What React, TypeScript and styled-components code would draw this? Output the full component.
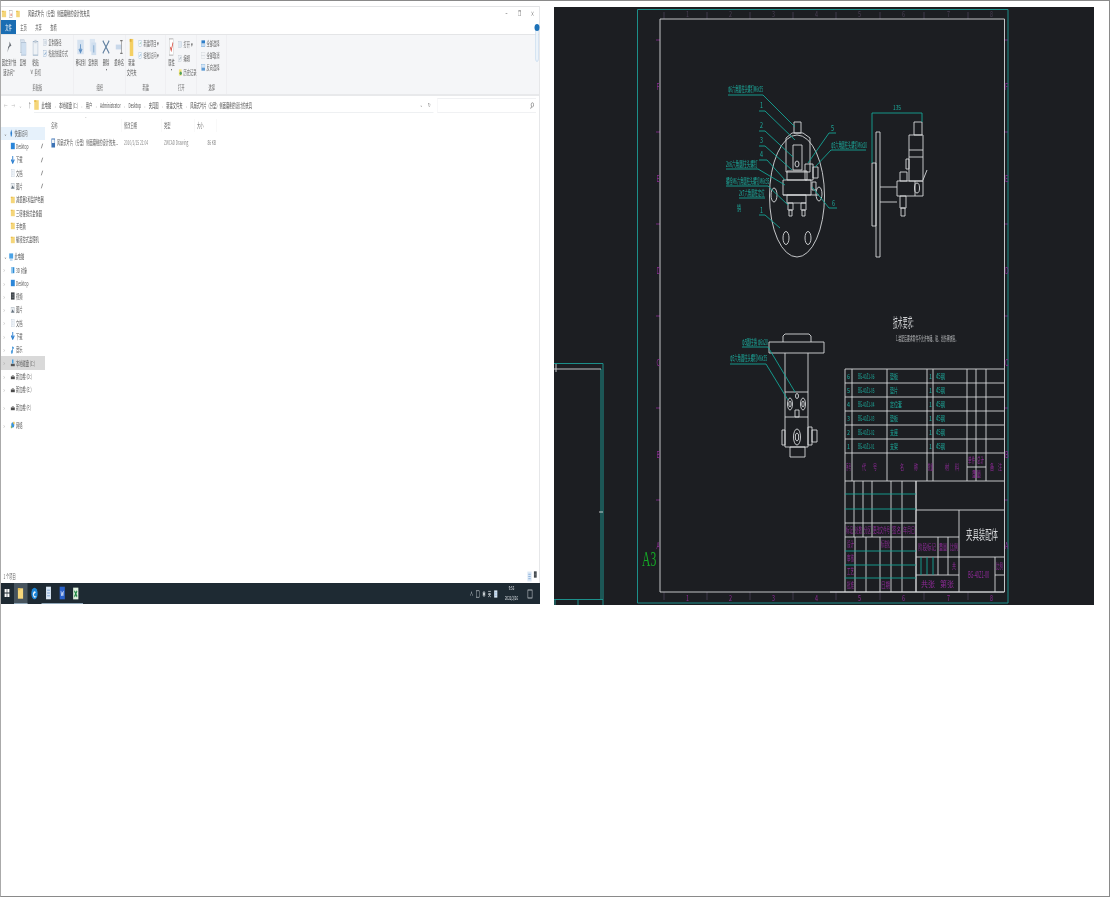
import React from "react";
import styled, { createGlobalStyle } from "styled-components";

const Global = createGlobalStyle`
  html, body { margin: 0; padding: 0; background: #fff; }
  body { font-family: "Noto Sans CJK SC", "Noto Sans", sans-serif; }
`;

const Page = styled.div`
  box-sizing: border-box;
  width: 1110px;
  height: 897px;
  border: 1px solid #8a8a8a;
  border-left-color: #aaa;
  padding-top: 5px;
  display: flex;
  align-items: flex-start;
  gap: 14px;
  overflow: hidden;
`;

/* ---------- Explorer: a screenshot squeezed to half its width ---------- */
const WindowFrame = styled.div`
  width: 539px;
  height: 598px;
  flex: none;
  overflow: hidden;
  filter: blur(0.3px);
`;
const WindowInner = styled.div`
  position: relative;
  box-sizing: border-box;
  width: 1078px;
  height: 598px;
  transform: scaleX(0.5);
  transform-origin: 0 0;
  display: flex;
  flex-direction: column;
  background: #fff;
  border-top: 1px solid #e2e3e5;
  border-right: 2px solid #e6e7e9;
  color: #5a5a5a;
  font-size: 6.5px;
  line-height: 1;
  white-space: nowrap;
`;
const TitleBar = styled.div`
  height: 13px;
  display: flex;
  align-items: center;
  gap: 5px;
  padding: 0 0 0 1px;
  flex: none;
`;
const TitleText = styled.span`
  margin-left: 11px;
  color: #444;
`;
const WindowButtons = styled.div`
  margin-left: auto;
  display: flex;
  color: #555;
  font-size: 7px;
`;
const WindowButton = styled.span`
  width: 26px;
  text-align: center;
`;
const TabBar = styled.div`
  height: 14px;
  display: flex;
  align-items: stretch;
  flex: none;
  border-bottom: 1px solid #e4e5e7;
`;
const Tab = styled.span<{ $file?: boolean }>`
  width: ${(p) => (p.$file ? 30 : 30)}px;
  display: flex;
  align-items: center;
  justify-content: center;
  background: ${(p) => (p.$file ? "#1a6db3" : "transparent")};
  color: ${(p) => (p.$file ? "#fff" : "#555")};
`;
const Ribbon = styled.div`
  height: 59px;
  flex: none;
  display: flex;
  background: #f5f6f8;
  border-bottom: 2px solid #e8e9eb;
`;
const Group = styled.div<{ $w: number }>`
  width: ${(p) => p.$w}px;
  flex: none;
  box-sizing: border-box;
  display: flex;
  flex-direction: column;
  border-right: 1px solid #e8e9ec;
`;
const GroupBody = styled.div`
  height: 46px;
  display: flex;
  flex: none;
  padding-top: 2px;
`;
const GroupCaption = styled.div`
  text-align: center;
  color: #6a6a6a;
  padding-top: 1px;
`;
const BigButton = styled.div<{ $w: number }>`
  width: ${(p) => p.$w}px;
  flex: none;
  display: flex;
  flex-direction: column;
  align-items: center;
`;
const BigIcon = styled.div`
  height: 20px;
  display: flex;
  align-items: center;
  justify-content: center;
`;
const BigLabel = styled.div`
  height: 10px;
  display: flex;
  align-items: center;
  color: #555;
`;
const Caret = styled.div`
  color: #555;
  font-size: 4px;
  height: 5px;
`;
const SmallColumn = styled.div<{ $h: number; $left: number }>`
  display: flex;
  flex-direction: column;
  padding-left: ${(p) => p.$left}px;
  & > div { height: ${(p) => p.$h}px; }
`;
const SmallRow = styled.div`
  display: flex;
  align-items: center;
  gap: 2px;
  color: #666;
`;
const CutRow = styled(SmallRow)`
  margin-top: 2px;
`;
const HelpCapsule = styled.div`
  position: absolute;
  right: 1px;
  top: 20px;
  width: 4px;
  height: 33px;
  border: 1px solid #bcd4ec;
  border-radius: 3px;
  background: #f7fafd;
`;
const HelpDot = styled.div`
  position: absolute;
  right: -1px;
  top: 17px;
  width: 10px;
  height: 7px;
  border-radius: 50%;
  background: #1d72b8;
`;
const AddressRow = styled.div`
  height: 20px;
  flex: none;
  box-sizing: border-box;
  padding: 2px 6px 3px 0;
  display: flex;
  gap: 8px;
`;
const NavButtons = styled.div`
  width: 58px;
  flex: none;
  display: flex;
  align-items: center;
  padding-left: 6px;
  gap: 8px;
  color: #bbb;
  font-size: 7px;
  box-sizing: border-box;
`;
const Up = styled.span`
  color: #666;
  margin-left: 4px;
`;
const AddressBox = styled.div`
  flex: 1;
  display: flex;
  align-items: center;
  gap: 5px;
  border-bottom: 1px solid #eef0f2;
  padding-right: 6px;
`;
const Crumb = styled.span`
  color: #4d4d4d;
`;
const CrumbSep = styled.span`
  color: #888;
  font-size: 5px;
  margin: 0 2px;
`;
const AddressEnd = styled.span`
  margin-left: auto;
  color: #777;
  font-size: 6px;
  display: flex;
  gap: 12px;
`;
const SearchBox = styled.div`
  width: 192px;
  flex: none;
  display: flex;
  align-items: center;
  justify-content: flex-end;
  border: 1px solid #f0f1f3;
  border-width: 1px 0 1px 1px;
  padding-right: 4px;
`;
const Main = styled.div`
  flex: 1;
  min-height: 0;
  display: flex;
`;
const Sidebar = styled.div`
  width: 88px;
  flex: none;
  padding-top: 10.5px;
  box-sizing: border-box;
`;
const NavGroup = styled.div<{ $gap?: number }>`
  margin-top: ${(p) => p.$gap ?? 0}px;
`;
const NavRow = styled.div<{ $active?: string; $indent?: number }>`
  height: 13.3px;
  display: flex;
  align-items: center;
  position: relative;
  gap: 2px;
  padding-left: ${(p) => p.$indent ?? 18}px;
  background: ${(p) => (p.$active === "selected" ? "#d9d9d9" : p.$active === "hover" ? "#e6f1fb" : "transparent")};
  color: #555;
`;
const Chevron = styled.span`
  position: absolute;
  left: 5px;
  font-size: 7px;
  color: #777;
`;
const PinMark = styled.span`
  position: absolute;
  left: 79px;
`;
const FileArea = styled.div`
  flex: 1;
  padding-left: 8px;
  padding-top: 3px;
`;
const FileGrid = styled.div`
  display: grid;
  grid-template-columns: 146px 80px 66px 44px;
  width: 340px;
`;
const HeadCell = styled.div`
  position: relative;
  height: 13px;
  display: flex;
  align-items: center;
  padding-left: 4px;
  color: #6a6a6a;
  border-right: 1px solid #f2f2f2;
`;
const SortMark = styled.span`
  position: absolute;
  left: 72px;
  top: -3px;
  font-size: 4px;
  color: #888;
`;
const Cell = styled.div<{ $right?: boolean }>`
  height: 13px;
  margin-top: 4px;
  display: flex;
  align-items: center;
  gap: 3px;
  padding-left: 4px;
  color: #8a8a8a;
  justify-content: ${(p) => (p.$right ? "flex-end" : "flex-start")};
  padding-right: ${(p) => (p.$right ? 2 : 0)}px;
`;
const NameText = styled.span`
  color: #555;
`;
const StatusBar = styled.div`
  height: 13px;
  flex: none;
  display: flex;
  align-items: center;
  padding-left: 5px;
  color: #666;
`;
const ViewIcons = styled.div`
  margin-left: auto;
  margin-right: 4px;
  display: flex;
  gap: 2px;
`;
const Taskbar = styled.div`
  height: 21px;
  flex: none;
  background: #1e2a33;
  display: flex;
  align-items: stretch;
  color: #dfe4e8;
  margin-right: -2px;
`;
const TaskItem = styled.div<{ $active?: boolean; $open?: boolean }>`
  width: 27.6px;
  flex: none;
  display: flex;
  align-items: center;
  justify-content: center;
  box-sizing: border-box;
  background: ${(p) => (p.$active ? "#47545e" : "transparent")};
  border-bottom: 1px solid ${(p) => (p.$open || p.$active ? "#8fa6b8" : "transparent")};
  &:first-child { margin-left: -2px; }
`;
const Tray = styled.div`
  margin-left: auto;
  display: flex;
  align-items: center;
  gap: 5px;
  font-size: 6px;
  padding-right: 14px;
`;
const Clock = styled.div`
  display: flex;
  flex-direction: column;
  align-items: center;
  gap: 5px;
  font-size: 5.5px;
  width: 40px;
  margin: 0 6px 0 2px;
`;

/* ---------- Small drawn icons (width is doubled, the window is squeezed) ---------- */
const Svg = styled.svg`
  flex: none;
  display: block;
`;
type IconName =
  | "folder" | "doc" | "pin" | "copy" | "paste" | "scissors" | "path" | "shortcut" | "move" | "copyTo" | "del" | "rename"
  | "newFolder" | "newItem" | "access" | "props" | "open" | "edit" | "history" | "all" | "none" | "invert"
  | "desktop" | "down" | "file" | "pic" | "star" | "pc" | "cube" | "video" | "music" | "disk" | "disk2" | "net" | "cad"
  | "win" | "edge" | "word" | "excel" | "pageBlue" | "note" | "search" | "quickPin";

const Icon = ({ n, w, h }: { n: IconName; w: number; h: number }) => {
  const v = `0 0 20 20`;
  const body: Record<IconName, React.ReactNode> = {
    folder: <><rect x="1" y="2" width="18" height="16" fill="#f5d67a" /><rect x="1" y="2" width="8" height="3" fill="#e8bd4f" /></>,
    doc: <><rect x="3" y="1" width="14" height="18" fill="#fff" stroke="#a8a8a8" strokeWidth="1.5" /><rect x="6" y="9" width="8" height="6" fill="#e8a9a0" /></>,
    pin: <path d="M12 1 L18 8 L13 9 L9 12 L5 19 L7 10 L11 7 Z" fill="#6a7077" />,
    copy: <><rect x="2" y="1" width="13" height="15" fill="#dce6f1" stroke="#bcc9d6" /><rect x="6" y="4" width="13" height="15" fill="#cfdff0" stroke="#aebfd2" /></>,
    paste: <><rect x="3" y="3" width="14" height="16" fill="#eef2f6" stroke="#9fb3c8" strokeWidth="1.2" /><rect x="7" y="1" width="6" height="4" fill="#c5cfd9" /></>,
    scissors: <path d="M4 2 L12 14 M16 2 L8 14" stroke="#777" strokeWidth="2" fill="none" />,
    path: <><rect x="3" y="2" width="14" height="16" fill="#e8edf3" stroke="#a5b4c4" /><path d="M6 8h8M6 12h8" stroke="#7f93a8" /></>,
    shortcut: <><rect x="3" y="2" width="14" height="16" fill="#eef2f6" stroke="#7da0c6" /><path d="M7 14 L13 7" stroke="#3f78b5" strokeWidth="2" /></>,
    move: <><rect x="2" y="2" width="16" height="16" fill="#d5e2f0" /><path d="M10 7v9M6 12l4 4 4-4" stroke="#5d8fc4" strokeWidth="2" fill="none" /></>,
    copyTo: <><rect x="2" y="1" width="13" height="14" fill="#dbe6f2" /><rect x="6" y="5" width="12" height="14" fill="#cfdeee" /><path d="M12 8v8" stroke="#7aa3cc" strokeWidth="2" /></>,
    del: <path d="M2 2 L18 18 M18 2 L2 18" stroke="#5f7f9f" strokeWidth="2.2" fill="none" />,
    rename: <><rect x="2" y="7" width="14" height="6" fill="#c8d8ea" /><path d="M16 2v16M13 2h6M13 18h6" stroke="#777" strokeWidth="1.4" fill="none" /></>,
    newFolder: <><rect x="3" y="1" width="14" height="18" fill="#f4cf62" /><rect x="3" y="1" width="7" height="3" fill="#dfb03c" /></>,
    newItem: <><rect x="4" y="2" width="12" height="16" fill="#f6fafd" stroke="#7fa6c9" /><path d="M8 12 L12 7" stroke="#49a06b" strokeWidth="2" /></>,
    access: <><rect x="4" y="2" width="12" height="16" fill="#f6fafd" stroke="#7fa6c9" /><path d="M7 14 Q10 4 14 8" stroke="#4b84bd" strokeWidth="1.6" fill="none" /></>,
    props: <><rect x="3" y="1" width="14" height="18" fill="#fff" stroke="#a9a9a9" /><path d="M6 10 L9 14 L15 5" stroke="#d23c2f" strokeWidth="2" fill="none" /></>,
    open: <><rect x="3" y="2" width="14" height="16" fill="#dfe8f2" stroke="#a9b9c9" /></>,
    edit: <><rect x="3" y="2" width="14" height="16" fill="#edf1f5" stroke="#b0b9c3" /><path d="M7 13 L13 6" stroke="#7a8794" strokeWidth="2" /></>,
    history: <><rect x="4" y="1" width="12" height="18" fill="#f3e27a" /><circle cx="12" cy="12" r="5" fill="#4f9e5c" /></>,
    all: <><rect x="2" y="1" width="16" height="8" fill="#2f7fc9" /><rect x="2" y="11" width="16" height="8" fill="#c8def3" stroke="#2f7fc9" /></>,
    none: <><rect x="2" y="1" width="16" height="8" fill="#f3f5f7" stroke="#c6cbd0" /><rect x="2" y="11" width="16" height="8" fill="#f3f5f7" stroke="#c6cbd0" /></>,
    invert: <><rect x="2" y="1" width="16" height="8" fill="#d6e6f5" stroke="#5d9bd5" /><rect x="2" y="11" width="16" height="8" fill="#5d9bd5" /></>,
    desktop: <rect x="1" y="2" width="18" height="16" fill="#2b86d9" />,
    down: <path d="M10 0v14M3 9l7 9 7-9" stroke="#2c7fd0" strokeWidth="4" fill="none" />,
    file: <><rect x="4" y="0" width="12" height="20" fill="#f3f6f9" stroke="#9db1c4" /><path d="M7 6h6M7 10h6M7 14h6" stroke="#a9bccd" /></>,
    pic: <><rect x="2" y="3" width="16" height="14" fill="#e9edf1" stroke="#8f9ba6" /><path d="M3 16 L9 8 L17 16" fill="#66727d" /></>,
    star: <path d="M10 1 L14 10 L12 19 L8 19 L6 10 Z" fill="#2c7fd0" />,
    pc: <><rect x="1" y="1" width="18" height="13" fill="#4ba3e6" /><rect x="4" y="16" width="12" height="3" fill="#9fc7ea" /></>,
    cube: <><rect x="3" y="3" width="14" height="15" fill="#2e8ed8" /><rect x="3" y="3" width="7" height="15" fill="#a7d3f2" /></>,
    video: <><rect x="2" y="1" width="16" height="18" fill="#3c4247" /><path d="M5 6h10M5 10h10M5 14h10" stroke="#c5c9cd" /></>,
    music: <path d="M9 2v13a3 3 0 1 1-3-3h3 M9 2 L15 6" stroke="#2d8ad6" strokeWidth="3" fill="none" />,
    disk: <><rect x="1" y="12" width="18" height="6" fill="#555" /><path d="M7 1h6v10H7z" fill="#3c9ae0" /></>,
    disk2: <><rect x="1" y="11" width="18" height="7" fill="#4b4b4b" /><rect x="6" y="8" width="9" height="3" fill="#8d8d8d" /></>,
    net: <><circle cx="10" cy="10" r="7" fill="#3a93dd" /><rect x="1" y="12" width="6" height="6" fill="#88b36a" /><rect x="12" y="2" width="6" height="6" fill="#e6c14f" /></>,
    cad: <><rect x="2" y="1" width="16" height="18" fill="#3d73b5" /><rect x="4" y="3" width="12" height="7" fill="#f0f4f8" /></>,
    win: <><rect x="2" y="2" width="7" height="7" fill="#fff" /><rect x="11" y="2" width="7" height="7" fill="#fff" /><rect x="2" y="11" width="7" height="7" fill="#fff" /><rect x="11" y="11" width="7" height="7" fill="#fff" /></>,
    edge: <><circle cx="10" cy="10" r="9" fill="#1f87d8" /><path d="M5 11 Q8 4 14 8 L8 11 Q9 16 16 14 Q9 20 5 11Z" fill="#f4f8fb" /></>,
    pageBlue: <><rect x="3" y="1" width="14" height="18" fill="#dbe8f6" /><path d="M6 6h8M6 10h8M6 14h8" stroke="#5d8fc9" strokeWidth="1.4" /></>,
    word: <><rect x="2" y="1" width="16" height="18" fill="#2b62c9" /><path d="M6 7 L8 14 L10 9 L12 14 L14 7" stroke="#fff" fill="none" /></>,
    excel: <><rect x="2" y="1" width="16" height="18" fill="#dff0df" /><path d="M6 6 L14 15 M14 6 L6 15" stroke="#238a46" strokeWidth="3" /></>,
    note: <rect x="3" y="2" width="14" height="16" fill="none" stroke="#dfe4e8" strokeWidth="1.5" />,
    search: <><circle cx="12" cy="8" r="6" fill="none" stroke="#777" strokeWidth="2.4" /><path d="M8 13 L3 19" stroke="#777" strokeWidth="3" /></>,
    quickPin: <path d="M15 2 L5 18" stroke="#666" strokeWidth="3" />,
  };
  return (
    <Svg width={w} height={h} viewBox={v} preserveAspectRatio="none">
      {body[n]}
    </Svg>
  );
};

const Big = ({ n, w, iw, ih, lines, caret, children }: { n: IconName; w: number; iw: number; ih: number; lines: string[]; caret?: boolean; children?: React.ReactNode }) => (
  <BigButton $w={w}>
    <BigIcon><Icon n={n} w={iw} h={ih} /></BigIcon>
    {lines.map((l) => <BigLabel key={l}>{l}</BigLabel>)}
    {caret && <Caret>▾</Caret>}
    {children}
  </BigButton>
);
const Small = ({ n, t }: { n: IconName; t: string }) => (
  <SmallRow><Icon n={n} w={9} h={7} /><span>{t}</span></SmallRow>
);

const crumbs = ["此电脑", "本地磁盘 (C:)", "用户", "Administrator", "Desktop", "夹具图", "新建文件夹", "风扇式叶片（分型）侧面磨削的设计的夹具"];

type Nav = { t: string; i: IconName; pin?: boolean; chev?: boolean; head?: boolean; active?: string };
const quick: Nav[] = [
  { t: "Desktop", i: "desktop", pin: true },
  { t: "下载", i: "down", pin: true },
  { t: "文档", i: "file", pin: true },
  { t: "图片", i: "pic", pin: true },
  { t: "减重器1和监护电器", i: "folder" },
  { t: "三塔锥销式金像圆", i: "folder" },
  { t: "手电筒", i: "folder" },
  { t: "榆液控式监理机", i: "folder" },
];
const pcs: Nav[] = [
  { t: "3D 对象", i: "cube", chev: true },
  { t: "Desktop", i: "desktop", chev: true },
  { t: "视频", i: "video", chev: true },
  { t: "图片", i: "pic", chev: true },
  { t: "文档", i: "file", chev: true },
  { t: "下载", i: "down", chev: true },
  { t: "音乐", i: "music", chev: true },
  { t: "本地磁盘 (C:)", i: "disk", chev: true, active: "selected" },
  { t: "新加卷 (D:)", i: "disk2", chev: true },
  { t: "新加卷 (E:)", i: "disk2", chev: true },
];
const NavLine = ({ r }: { r: Nav }) => (
  <NavRow $active={r.active} $indent={r.head ? 16 : 19}>
    {(r.chev || r.head) && <Chevron>{r.head ? "⌄" : "›"}</Chevron>}
    <Icon n={r.i} w={9} h={8} />
    <span>{r.t}</span>
    {r.pin && <PinMark><Icon n="quickPin" w={6} h={6} /></PinMark>}
  </NavRow>
);

const Explorer = () => (
  <WindowFrame>
    <WindowInner>
      <TitleBar>
        <Icon n="folder" w={10} h={8} />
        <Icon n="doc" w={9} h={8} />
        <Icon n="folder" w={8} h={8} />
        <TitleText>风扇式叶片（分型）侧面磨削的设计的夹具</TitleText>
        <WindowButtons>
          <WindowButton>−</WindowButton>
          <WindowButton>❐</WindowButton>
          <WindowButton>×</WindowButton>
        </WindowButtons>
      </TitleBar>
      <TabBar>
        <Tab $file>文件</Tab>
        <Tab>主页</Tab>
        <Tab>共享</Tab>
        <Tab>查看</Tab>
      </TabBar>
      <Ribbon>
        <Group $w={146}>
          <GroupBody>
            <Big n="pin" w={32} iw={12} ih={12} lines={["固定到\"快", "速访问\""]} />
            <Big n="copy" w={24} iw={14} ih={17} lines={["复制"]} />
            <Big n="paste" w={26} iw={14} ih={17} lines={["粘贴"]}>
              <CutRow><Icon n="scissors" w={7} h={7} /><span>剪切</span></CutRow>
            </Big>
            <SmallColumn $h={11} $left={2}>
              <Small n="path" t="复制路径" />
              <Small n="shortcut" t="粘贴快捷方式" />
            </SmallColumn>
          </GroupBody>
          <GroupCaption>剪贴板</GroupCaption>
        </Group>
        <Group $w={104}>
          <GroupBody>
            <Big n="move" w={26} iw={16} ih={18} lines={["移动到"]} />
            <Big n="copyTo" w={24} iw={16} ih={18} lines={["复制到"]} />
            <Big n="del" w={28} iw={16} ih={16} lines={["删除"]} caret />
            <Big n="rename" w={24} iw={16} ih={16} lines={["重命名"]} />
          </GroupBody>
          <GroupCaption>组织</GroupCaption>
        </Group>
        <Group $w={80}>
          <GroupBody>
            <Big n="newFolder" w={22} iw={10} ih={19} lines={["新建", "文件夹"]} />
            <SmallColumn $h={12} $left={2}>
              <Small n="newItem" t="新建项目 ▾" />
              <Small n="access" t="轻松访问 ▾" />
            </SmallColumn>
          </GroupBody>
          <GroupCaption>新建</GroupCaption>
        </Group>
        <Group $w={62}>
          <GroupBody>
            <Big n="props" w={22} iw={12} ih={18} lines={["属性"]} caret />
            <SmallColumn $h={14} $left={2}>
              <Small n="open" t="打开 ▾" />
              <Small n="edit" t="编辑" />
              <Small n="history" t="历史记录" />
            </SmallColumn>
          </GroupBody>
          <GroupCaption>打开</GroupCaption>
        </Group>
        <Group $w={60}>
          <GroupBody>
            <SmallColumn $h={12} $left={8}>
              <Small n="all" t="全部选择" />
              <Small n="none" t="全部取消" />
              <Small n="invert" t="反向选择" />
            </SmallColumn>
          </GroupBody>
          <GroupCaption>选择</GroupCaption>
        </Group>
      </Ribbon>
      <HelpCapsule />
      <HelpDot />
      <AddressRow>
        <NavButtons>
          <span>←</span><span>→</span><span>⌄</span><Up>↑</Up>
        </NavButtons>
        <AddressBox>
          <Icon n="folder" w={10} h={12} />
          {crumbs.map((c, i) => (
            <React.Fragment key={c}>
              {i > 0 && <CrumbSep>›</CrumbSep>}
              <Crumb>{c}</Crumb>
            </React.Fragment>
          ))}
          <AddressEnd><span>⌄</span><span>↻</span></AddressEnd>
        </AddressBox>
        <SearchBox><Icon n="search" w={8} h={7} /></SearchBox>
      </AddressRow>
      <Main>
        <Sidebar>
          <NavGroup>
            <NavLine r={{ t: "快速访问", i: "star", head: true, active: "hover" }} />
            {quick.map((r) => <NavLine key={r.t} r={r} />)}
          </NavGroup>
          <NavGroup $gap={3.7}>
            <NavLine r={{ t: "此电脑", i: "pc", head: true }} />
            {pcs.map((r) => <NavLine key={r.t} r={r} />)}
          </NavGroup>
          <NavGroup $gap={4.7}>
            <NavLine r={{ t: "新加卷 (F:)", i: "disk2", chev: true }} />
          </NavGroup>
          <NavGroup $gap={4.7}>
            <NavLine r={{ t: "网络", i: "net", chev: true }} />
          </NavGroup>
        </Sidebar>
        <FileArea>
          <FileGrid>
            <HeadCell>名称<SortMark>⌃</SortMark></HeadCell>
            <HeadCell>修改日期</HeadCell>
            <HeadCell>类型</HeadCell>
            <HeadCell>大小</HeadCell>
            <Cell><Icon n="cad" w={9} h={10} /><NameText>风扇式叶片（分型）侧面磨削的设计的夹...</NameText></Cell>
            <Cell>2010/1/15 21:04</Cell>
            <Cell>ZWCAD Drawing</Cell>
            <Cell $right>86 KB</Cell>
          </FileGrid>
        </FileArea>
      </Main>
      <StatusBar>
        1 个项目
        <ViewIcons>
          <Icon n="pageBlue" w={12} h={11} />
          <Icon n="video" w={7} h={7} />
        </ViewIcons>
      </StatusBar>
      <Taskbar>
        <TaskItem><Icon n="win" w={12} h={10} /></TaskItem>
        <TaskItem $active><Icon n="folder" w={12} h={13} /></TaskItem>
        <TaskItem><Icon n="edge" w={14} h={13} /></TaskItem>
        <TaskItem $open><Icon n="pageBlue" w={14} h={14} /></TaskItem>
        <TaskItem $open><Icon n="word" w={13} h={14} /></TaskItem>
        <TaskItem $open><Icon n="excel" w={13} h={13} /></TaskItem>
        <Tray>
          <span>∧</span>
          <Icon n="note" w={9} h={8} />
          <span>◉</span>
          <span>英</span>
          <Icon n="pageBlue" w={9} h={8} />
          <Clock><span>9:56</span><span>2021/3/26</span></Clock>
          <Icon n="note" w={12} h={10} />
        </Tray>
      </Taskbar>
    </WindowInner>
  </WindowFrame>
);

/* ---------- CAD drawing ---------- */
const CadPanel = styled.div`
  width: 540px;
  height: 598px;
  margin-top: 1px;
  flex: none;
  background: #1c1e22;
  filter: blur(0.35px);
`;
const CadSvg = styled.svg`
  display: block;
  width: 540px;
  height: 598px;
  font-family: "Noto Sans CJK SC", "Noto Sans", sans-serif;
`;
const Stroke = styled.path<{ $c: string; $w?: number }>`
  fill: none;
  stroke: ${(p) => p.$c};
  stroke-width: ${(p) => p.$w ?? 1};
`;
const Label = styled.text<{ $c: string; $serif?: boolean }>`
  fill: ${(p) => p.$c};
  font-family: ${(p) => (p.$serif ? '"Liberation Serif", "Noto Sans CJK SC", serif' : "inherit")};
`;

const TEAL = "#14a596";
const FRAME = "#1c8f8a";
const WHITE = "#d6d8da";
const MAG = "#8f2a98";
const LBL = "#1cae9f";
const DIM = "#4a3f55";

const r = (a: number, b: number, c: number, d: number) => `M${a} ${b}H${c}V${d}H${a}Z`;
const l = (a: number, b: number, c: number, d: number) => `M${a} ${b}L${c} ${d}`;
const e = (x: number, y: number, rx: number, ry: number) => `M${x - rx} ${y}A${rx} ${ry} 0 1 0 ${x + rx} ${y}A${rx} ${ry} 0 1 0 ${x - rx} ${y}Z`;

const white = [
  r(660, 19, 1004.5, 592),
  l(830, 592, 1004, 592),
  "M554 369H601",
  l(556, 364, 556, 372),
  // front view
  e(797, 196, 27.5, 61),
  e(774, 195, 3, 7), e(819, 194, 3, 7), e(786, 238, 3, 6.5), e(808, 238, 3, 6.5),
  r(794, 122, 801, 133), "M792 133H803L810 138V172H786V138Z", r(793, 145, 802, 170), e(797, 164, 2, 3),
  r(787, 171, 807, 180), r(783, 180, 811, 195), r(805, 164, 813, 180), r(813, 167, 818, 178), r(812, 182, 816, 190),
  l(783, 195, 819, 195), r(787, 195, 806, 203), r(788, 203, 793, 210), r(789, 210, 792, 216), r(801, 203, 806, 210), r(802, 210, 805, 216),
  // side view
  r(876, 132, 880, 257), r(872, 163, 876, 226), l(880, 187, 897, 187), l(880, 202, 897, 202),
  r(897, 181, 923, 196), r(909, 135, 923, 181), r(914, 122, 922, 135), l(909, 150, 923, 150), l(909, 157, 923, 157),
  r(900, 172, 907, 181), r(906, 159, 909, 169), r(900, 196, 906, 208), r(901, 208, 905, 216), e(917, 188, 2.5, 5),
  "M923 180L927 170", l(915, 181, 915, 196),
  // lower view
  r(769, 342, 824, 353), "M783 342V336L785 334H809L811 336V342", l(785, 353, 785, 447), l(808, 353, 808, 447),
  l(785, 392, 808, 392), l(785, 417, 808, 417), e(790, 404, 2.5, 6), e(790, 404, 1.2, 3), e(803, 404, 2.5, 6), e(803, 404, 1.2, 3),
  e(797, 396, 1.5, 2.5), r(795, 410, 799, 417), e(797, 437, 3.5, 8), e(797, 437, 1.7, 4),
  l(785, 447, 808, 447), r(782, 430, 785, 445), r(808, 427, 812, 445), r(812, 430, 817, 442), r(790, 447, 805, 457),
  // parts list
  ...[369, 383, 397, 411, 425, 439, 453, 481].map((y) => l(845, y, 1004, y)),
  ...[845, 852, 887, 927, 933, 967, 976, 986].map((x) => l(x, 369, x, 481)),
  l(967, 467, 986, 467),
  // title block
  l(845, 523, 916, 523), l(845, 537, 959, 537), l(916, 510, 1004, 510), l(916, 557, 1004, 557), l(916, 575, 959, 575), l(995, 575, 1004, 575),
  ...[845, 854, 863, 872, 891, 902, 916].map((x) => l(x, 481, x, 537)),
  ...[845, 855, 866, 880, 891, 902, 916].map((x) => l(x, 537, x, 592)),
  l(959, 510, 959, 592), l(995, 557, 995, 592), l(938, 537, 938, 575), l(948, 537, 948, 575), l(916, 481, 916, 592),
  l(599, 512, 603, 512),
].join("");

const teal = [
  "M728 95H763L795 127",
  "M759 111H765L795 140",
  "M759 131H765L793 157",
  "M759 146H765L792 170",
  "M759 160H767L785 180",
  "M726 169H758L785 185",
  "M726 186H768L788 205",
  "M739 198H765",
  "M759 215H765L780 228",
  "M866 150H831L815 167",
  "M836 133H829L808 163",
  "M837 208H829L812 187",
  "M742 347H768L795 392",
  "M730 364H766L788 400",
  l(872, 113, 922, 113), l(872, 113, 872, 163), l(922, 113, 922, 122),
  ...[494, 509].map((y) => l(845, y, 916, y)),
  ...[551, 565, 578].map((y) => l(845, y, 916, y)),
  l(921, 557, 921, 575), l(927, 557, 927, 575), l(933, 557, 933, 575),
].join("");

const frame = [
  r(637.5, 9.5, 1008, 603),
  "M554 363.5H603V605",
  l(554, 599.5, 603, 599.5),
  l(601, 369, 601, 600),
  l(555, 599, 555, 605), l(578, 599, 578, 605),
].join("");

const dimTicks = [664, 707, 750, 793, 836, 880, 924, 968].flatMap((x) => [l(x, 12, x, 19), l(x, 592, x, 600)]).join("");

const marks = [40, 132, 224, 316, 408, 500].flatMap((y) => [l(656, y, 660, y), l(1004, y, 1008, y)]).join("");

/* A CAD text is squeezed to a measured width, as the drawing itself is. */
const est = (t: string, s: number) =>
  [...t].reduce((sum, c) => sum + (c.charCodeAt(0) > 0x2000 ? s : s * 0.56), 0);

const Fit = ({ t, x, y, w, s, c, serif }: { t: string; x: number; y: number; w: number; s: number; c: string; serif?: boolean }) => (
  <Label
    transform={`translate(${x} ${y}) scale(${(w / est(t, s)).toFixed(3)} 1)`}
    fontSize={s}
    $c={c}
    $serif={serif}
  >
    {t}
  </Label>
);

type T = [string, number, number, number, number, string];
const labels: T[] = [
  ["φ6六角圆柱头螺钉M6x35", 728, 92, 34, 8, LBL],
  ["2x6六角圆柱头螺钉", 726, 167, 32, 8, LBL],
  ["螺栓M6六角圆柱头螺钉M6x35", 726, 184, 42, 8, LBL],
  ["2x7六角圆柱定位", 739, 196, 26, 8, LBL],
  ["销", 737, 211, 4, 8, LBL],
  ["φ5六角圆柱头螺钉M6x20", 831, 148, 35, 8, LBL],
  ["135", 893, 110, 8, 7, LBL],
  ["φ5圆柱销 φ6x20", 742, 345, 26, 8, LBL],
  ["φ5六角圆柱头螺钉M6x35", 730, 361, 36, 8, LBL],
  ["1", 760, 108, 3, 8, LBL], ["2", 760, 128, 3, 8, LBL], ["3", 760, 143, 3, 8, LBL], ["4", 760, 157, 3, 8, LBL], ["1", 760, 213, 3, 8, LBL],
  ["5", 831, 131, 3, 8, LBL], ["6", 832, 206, 3, 8, LBL],
  ["技术要求:", 893, 327, 22, 13, "#cfd1d3"],
  ["1.装配后要求零件不允许有磕、碰、划伤等缺陷。", 896, 341, 63, 7, "#b9bbbd"],
  ["夹具装配体", 966, 539, 32, 13, "#d4d6d8"],
  ["BG-40Z1-00", 968, 578, 22, 9, MAG],
];
const partNames = ["垫板", "垫片", "定位套", "垫板", "支座", "支架"];
partNames.forEach((n, i) => {
  const y = 379 + i * 14;
  labels.push([String(6 - i), 847, y, 3, 7, LBL], [`BG-40Z1-0${6 - i}`, 858, y, 17, 7, LBL], [n, 890, y, n.length * 4, 7, LBL], ["1", 929, y, 3, 7, LBL], ["45钢", 936, y, 9, 7, LBL]);
});
const magenta: [string, number, number, number, number?][] = [
  ["序号", 846, 470, 5], ["代", 862, 470, 4], ["号", 873, 470, 4], ["名", 900, 470, 4], ["称", 914, 470, 4],
  ["数量", 928, 470, 5], ["材", 945, 470, 4], ["料", 955, 470, 4], ["单件", 968, 463, 7], ["总计", 977, 463, 7], ["重量", 972, 477, 9], ["备", 990, 470, 4], ["注", 998, 470, 4],
  ["标记", 846, 533, 7], ["处数", 855, 533, 7], ["分区", 864, 533, 7], ["更改文件号", 873, 533, 17], ["签名", 892, 533, 9], ["年月日", 903, 533, 12],
  ["设计", 847, 547, 7], ["标准化", 881, 547, 9], ["审核", 847, 561, 7], ["工艺", 847, 574, 7], ["批准", 847, 588, 7], ["日期", 881, 588, 9],
  ["阶段标记", 918, 550, 18], ["重量", 939, 550, 8], ["比例", 950, 550, 8], ["共", 952, 569, 4], ["共张", 921, 587, 14], ["第张", 940, 587, 14], ["比例", 996, 569, 7],
];
const edgeLetters: [string, number, number][] = [
  ["F", 656.5, 90], ["E", 656.5, 182], ["D", 656.5, 274], ["C", 656.5, 366], ["B", 656.5, 458], ["A", 656.5, 549],
  ["F", 1005, 90], ["E", 1005, 182], ["D", 1005, 274], ["C", 1005, 366], ["B", 1005, 458], ["A", 1005, 549],
];
const edgeDigits = [686, 729, 772, 815, 858, 902, 947, 990];

const Cad = () => (
  <CadPanel>
    <CadSvg viewBox="554 7 540 598">
      <Stroke $c={DIM} $w={0.8} d={dimTicks} />
      <Stroke $c={MAG} $w={0.8} d={marks} />
      <Stroke $c={FRAME} d={frame} />
      <Stroke $c={WHITE} $w={0.9} d={white} />
      <Stroke $c={TEAL} $w={0.9} d={teal} />
      {labels.map(([t, x, y, w, s, c], i) => (
        <Fit key={i} t={t} x={x} y={y} w={w} s={s} c={c} />
      ))}
      <Fit t="A3" x={642} y={566} w={13} s={22} c="#14a826" serif />
      {magenta.map(([t, x, y, w], i) => (
        <Fit key={i} t={t} x={x} y={y} w={w} s={8} c={MAG} />
      ))}
      {edgeLetters.map(([t, x, y], i) => (
        <Fit key={i} t={t} x={x} y={y} w={3} s={9} c={MAG} />
      ))}
      {edgeDigits.map((x, i) => (
        <React.Fragment key={x}>
          <Fit t={String(i + 1)} x={x} y={17} w={3} s={8} c={DIM} />
          <Fit t={String(i + 1)} x={x} y={601} w={3} s={8} c={MAG} />
        </React.Fragment>
      ))}
    </CadSvg>
  </CadPanel>
);

export default function App() {
  return (
    <Page>
      <Global />
      <Explorer />
      <Cad />
    </Page>
  );
}
